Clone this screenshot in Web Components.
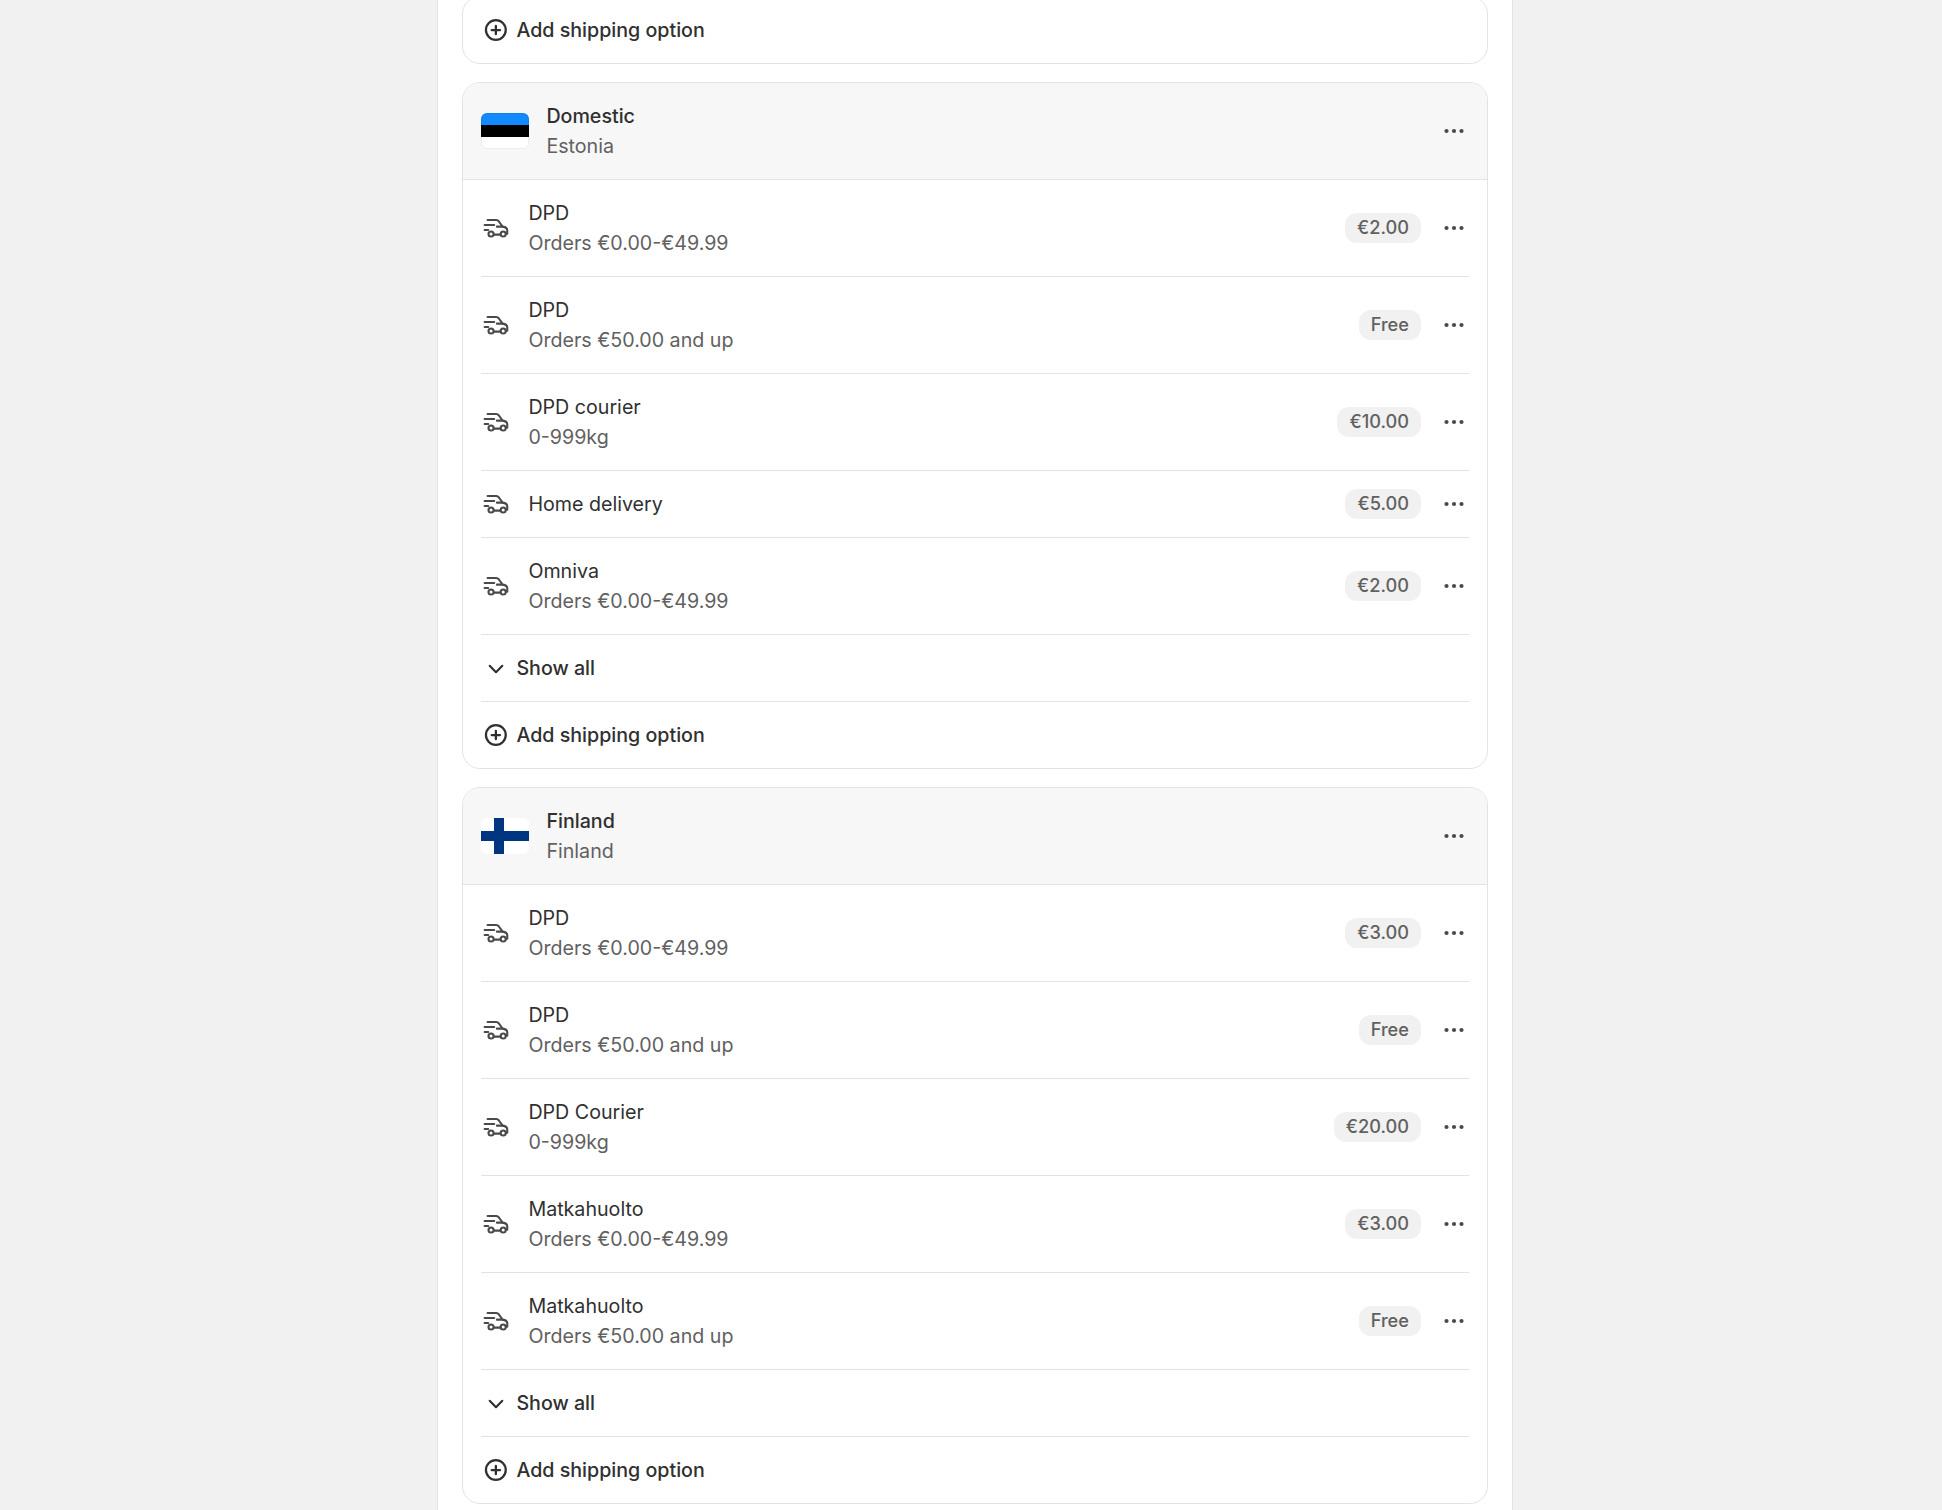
<!DOCTYPE html>
<html>
<head>
<meta charset="utf-8">
<style>
  html, body { margin: 0; background: #f1f1f1; }
  body { font-family: "Inter", "Liberation Sans", sans-serif; color: #303030; }
</style>
</head>
<body>
<shipping-page>
  <shipping-zone headless>
    <shipping-action icon="plus" label="Add shipping option" last></shipping-action>
  </shipping-zone>

  <shipping-zone name="Domestic" region="Estonia" flag="ee">
    <shipping-rate name="DPD" note="Orders €0.00-€49.99" price="€2.00"></shipping-rate>
    <shipping-rate name="DPD" note="Orders €50.00 and up" price="Free"></shipping-rate>
    <shipping-rate name="DPD courier" note="0-999kg" price="€10.00"></shipping-rate>
    <shipping-rate name="Home delivery" price="€5.00"></shipping-rate>
    <shipping-rate name="Omniva" note="Orders €0.00-€49.99" price="€2.00"></shipping-rate>
    <shipping-action icon="chevron" label="Show all"></shipping-action>
    <shipping-action icon="plus" label="Add shipping option" last></shipping-action>
  </shipping-zone>

  <shipping-zone name="Finland" region="Finland" flag="fi">
    <shipping-rate name="DPD" note="Orders €0.00-€49.99" price="€3.00"></shipping-rate>
    <shipping-rate name="DPD" note="Orders €50.00 and up" price="Free"></shipping-rate>
    <shipping-rate name="DPD Courier" note="0-999kg" price="€20.00"></shipping-rate>
    <shipping-rate name="Matkahuolto" note="Orders €0.00-€49.99" price="€3.00"></shipping-rate>
    <shipping-rate name="Matkahuolto" note="Orders €50.00 and up" price="Free"></shipping-rate>
    <shipping-action icon="chevron" label="Show all"></shipping-action>
    <shipping-action icon="plus" label="Add shipping option" last></shipping-action>
  </shipping-zone>
</shipping-page>

<script>
const ICONS = {
  plus: `<svg viewBox="0 0 20 20" width="30" height="30" fill="none" stroke="#303030" stroke-width="1.5" stroke-linecap="round"><circle cx="9.9" cy="10" r="6.6"/><path d="M9.9 7.2v5.6M7.1 10h5.6"/></svg>`,
  chevron: `<svg viewBox="0 0 20 20" width="30" height="30" fill="none" stroke="#303030" stroke-width="1.4" stroke-linecap="round" stroke-linejoin="round"><path d="M5.8 8.5 10 12.8l4.2-4.3"/></svg>`,
  dots: `<svg viewBox="0 0 20 20" width="30" height="30" fill="#4a4a4a"><circle cx="5" cy="10" r="1.4"/><circle cx="10" cy="10" r="1.4"/><circle cx="15" cy="10" r="1.4"/></svg>`,
  truck: `<svg viewBox="0 0 20 20" width="30" height="30" fill="none" stroke="#4a4a4a" stroke-width="1.4" stroke-linecap="round" stroke-linejoin="round"><path d="M4.4 4.7h5.8c.7 0 1.2.3 1.6.8l2.6 3.6c1.9.3 3.1 1 3.1 2.4v2.3h-.9"/><path d="M2.4 8h6.4"/><path d="M2.4 11.3h2.4"/><path d="M10.6 9.1h3.8"/><path d="M12.9 14.4H8.7"/><circle cx="6.7" cy="14" r="1.7"/><circle cx="14.8" cy="14" r="1.7"/></svg>`,
  ee: `<svg viewBox="0 0 48 36" width="48" height="36"><defs><clipPath id="f"><rect width="48" height="36" rx="6"/></clipPath></defs><g clip-path="url(#f)"><rect width="48" height="12" fill="#1289ff"/><rect y="12" width="48" height="12" fill="#000"/><rect y="24" width="48" height="12" fill="#fff"/></g><rect x=".5" y=".5" width="47" height="35" rx="5.5" fill="none" stroke="#000" stroke-opacity=".08"/></svg>`,
  fi: `<svg viewBox="0 0 48 36" width="48" height="36"><defs><clipPath id="f"><rect width="48" height="36" rx="6"/></clipPath></defs><g clip-path="url(#f)"><rect width="48" height="36" fill="#fff"/><rect x="13" width="10" height="36" fill="#003580"/><rect y="13" width="48" height="10" fill="#003580"/></g></svg>`
};

class ShippingPage extends HTMLElement {
  constructor() {
    super();
    this.attachShadow({ mode: "open" });
  }

  connectedCallback() {
    this.shadowRoot.innerHTML = `
      <style>
        :host {
          display: flex;
          justify-content: center;
          height: 1510px;
          overflow: hidden;
          padding-left: 8px;
          box-sizing: border-box;
        }
        main {
          width: 1076px;
          box-sizing: border-box;
          margin-top: -4px;
          padding: 0 24px;
          background: #fff;
          border: solid #e3e3e3;
          border-width: 0 1px;
          display: flex;
          flex-direction: column;
          gap: 18px;
        }
      </style>
      <main><slot></slot></main>
    `;
  }
}

class ShippingZone extends HTMLElement {
  constructor() {
    super();
    this.attachShadow({ mode: "open" });
  }

  connectedCallback() {
    const head = this.hasAttribute("headless") ? "" : `
      <header>
        <span class="flag">${ICONS[this.getAttribute("flag")]}</span>
        <div class="names">
          <div class="name">${this.getAttribute("name")}</div>
          <div class="region">${this.getAttribute("region")}</div>
        </div>
        <span class="menu">${ICONS.dots}</span>
      </header>`;
    this.shadowRoot.innerHTML = `
      <style>
        :host {
          display: block;
          border: 1px solid #e3e3e3;
          border-radius: 18px;
          overflow: hidden;
          background: #fff;
        }
        header {
          display: flex;
          align-items: center;
          gap: 17.4px;
          padding: 18px;
          background: #f7f7f7;
          border-bottom: 1px solid #e3e3e3;
        }
        .flag, .menu { display: flex; }
        .names { flex: 1; font-size: 19.65px; line-height: 30px; }
        .name { font-weight: 550; color: #303030; }
        .region { color: #616161; }
      </style>
      ${head}
      <slot></slot>
    `;
  }
}

class ShippingRate extends HTMLElement {
  constructor() {
    super();
    this.attachShadow({ mode: "open" });
  }

  connectedCallback() {
    const note = this.getAttribute("note");
    this.shadowRoot.innerHTML = `
      <style>
        :host { display: block; padding: 0 18px; }
        .row {
          display: flex;
          align-items: center;
          padding: 18px 0;
          border-bottom: 1px solid #e3e3e3;
        }
        .icon, .menu { display: flex; }
        .icon { margin-right: 17.4px; }
        .text { flex: 1; font-size: 19.65px; line-height: 30px; color: #303030; }
        .note { color: #616161; }
        .badge {
          height: 30px;
          padding: 0 12px;
          margin-right: 18px;
          border-radius: 12px;
          background: #f1f1f1;
          color: #616161;
          font-size: 18.2px;
          font-weight: 550;
          line-height: 29px;
        }
      </style>
      <div class="row">
        <span class="icon">${ICONS.truck}</span>
        <div class="text">
          <div>${this.getAttribute("name")}</div>
          ${note ? `<div class="note">${note}</div>` : ""}
        </div>
        <span class="badge">${this.getAttribute("price")}</span>
        <span class="menu">${ICONS.dots}</span>
      </div>
    `;
  }
}

class ShippingAction extends HTMLElement {
  constructor() {
    super();
    this.attachShadow({ mode: "open" });
  }

  connectedCallback() {
    this.shadowRoot.innerHTML = `
      <style>
        :host { display: block; padding: 0 18px; }
        .row {
          display: flex;
          align-items: center;
          gap: 5.4px;
          padding: 18px 0;
          font-size: 19.65px;
          font-weight: 550;
          line-height: 30px;
          color: #303030;
          border-bottom: 1px solid #e3e3e3;
        }
        :host([last]) .row { border-bottom: 0; }
        .icon { display: flex; }
      </style>
      <div class="row">
        <span class="icon">${ICONS[this.getAttribute("icon")]}</span>
        <span>${this.getAttribute("label")}</span>
      </div>
    `;
  }
}

customElements.define("shipping-page", ShippingPage);
customElements.define("shipping-zone", ShippingZone);
customElements.define("shipping-rate", ShippingRate);
customElements.define("shipping-action", ShippingAction);
</script>
</body>
</html>
